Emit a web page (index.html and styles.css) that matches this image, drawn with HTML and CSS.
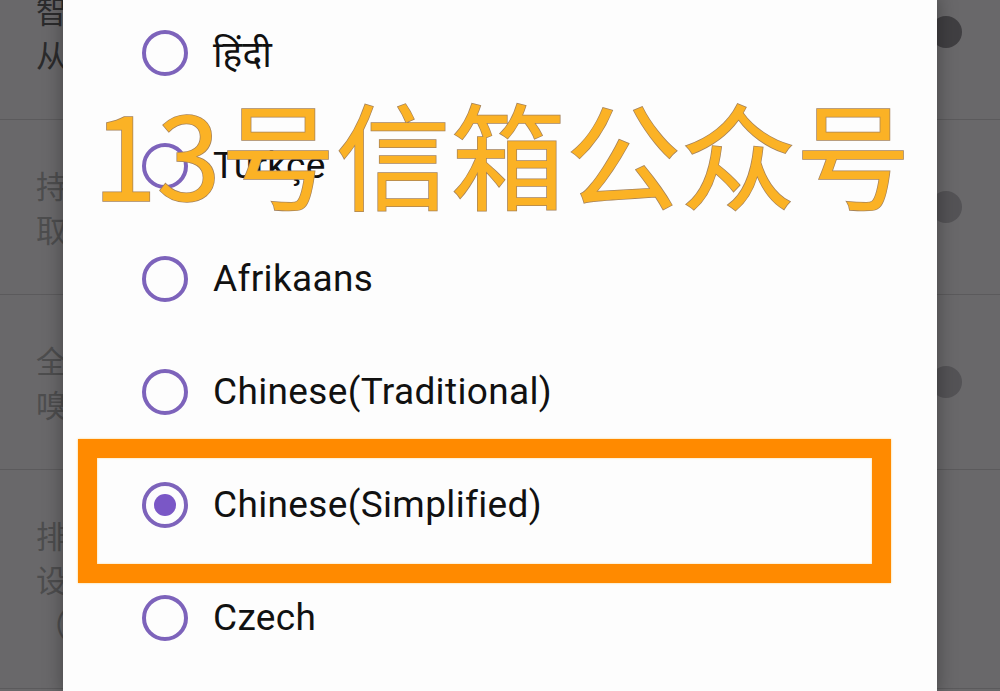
FILE: index.html
```html
<!DOCTYPE html>
<html lang="zh-CN">
<head>
  <meta charset="UTF-8" />
  <meta name="viewport" content="width=device-width, initial-scale=1.0"/>
  <title>Language</title>
  <link rel="stylesheet" href="styles.css">
</head>
<body>
  <div class="settings">
    <div class="pref">
      <div class="pref-text dark"><p>智能识别链接</p><p>从剪贴板中自动识别下载链接</p></div>
      <span class="thumb darker"></span>
    </div>
    <div class="pref">
      <div class="pref-text"><p>持续下载</p><p>取消下载后继续保留任务</p></div>
      <span class="thumb"></span>
    </div>
    <div class="pref">
      <div class="pref-text"><p>全局嗅探</p><p>嗅探网页中的视频资源</p></div>
      <span class="thumb"></span>
    </div>
    <div class="pref">
      <div class="pref-text"><p>排除列表</p><p>设置不需要嗅探的网站</p><p>（每行一个）</p></div>
    </div>
  </div>

  <div class="dialog">
    <ul class="langs">
      <li><span class="radio"></span><span class="label">हिंदी</span></li>
      <li><span class="radio"></span><span class="label">Türkçe</span></li>
      <li><span class="radio"></span><span class="label">Afrikaans</span></li>
      <li><span class="radio"></span><span class="label">Chinese(Traditional)</span></li>
      <li><span class="radio checked"></span><span class="label">Chinese(Simplified)</span></li>
      <li><span class="radio"></span><span class="label">Czech</span></li>
    </ul>
  </div>

  <div class="highlight"></div>
  <div class="watermark">13号信箱公众号</div>
</body>
</html>
```

FILE: styles.css
```css
body {
  margin: 0;
  height: 691px;
  overflow: hidden;
  background: #69686a;
  font-family: Roboto, "Noto Sans CJK SC", sans-serif;
  position: relative;
}
p { margin: 0; }

/* settings list behind the dialog */
.settings { margin-top: -55px; }
.pref { display: flex; align-items: center; justify-content: space-between; padding: 43px 38px 43px 36px; border-bottom: 1px solid #5b5a5c; }
.pref-text { font-family: "Noto Sans CJK SC", sans-serif; font-size: 31px; line-height: 44px; color: #4d4d4e; white-space: nowrap; }
.pref-text.dark { color: #2b2b2c; }
.thumb { width: 32px; height: 32px; border-radius: 50%; background: #545356; }
.thumb.darker { background: #403f42; }

/* language dialog */
.dialog { position: absolute; left: 63px; top: -4px; width: 874px; height: 700px; background: #fdfdfd; box-shadow: 0 0 18px rgba(0,0,0,0.35); }
.langs { list-style: none; margin: 0; padding: 0; }
.langs li { display: flex; align-items: center; gap: 25px; height: 113px; padding-left: 79px; }
.radio { width: 46px; height: 46px; box-sizing: border-box; border: 4px solid #7d63bb; border-radius: 50%; display: flex; align-items: center; justify-content: center; flex-shrink: 0; }
.radio.checked::after { content: ""; width: 22px; height: 22px; border-radius: 50%; background: #7a57c6; }
.label { font-size: 37px; letter-spacing: 0.35px; color: #111; font-family: Roboto, "Noto Sans", "Noto Sans Devanagari", sans-serif; }

/* annotations on top */
.highlight { position: absolute; left: 78px; top: 439px; width: 775px; height: 106px; border: 19px solid #ff8a00; box-shadow: 0 0 2px #ffd27a, inset 0 0 2px #ffd27a; }
.watermark { position: absolute; left: 93px; top: 86px; font-family: "Noto Sans CJK SC", sans-serif; font-size: 115px; line-height: 130px; color: #fbb225; -webkit-text-stroke: 1.5px #a5825a; paint-order: stroke fill; white-space: nowrap; }
```
